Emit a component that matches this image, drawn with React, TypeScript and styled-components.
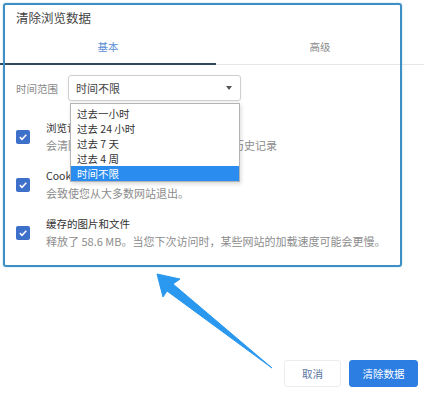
import React from "react";
import styled, { createGlobalStyle } from "styled-components";

const Global = createGlobalStyle`
  html, body { margin: 0; padding: 0; background: #fff; }
  body { font-family: "Noto Sans CJK SC", "Noto Sans", sans-serif; }
  * { box-sizing: border-box; }
`;

const Dialog = styled.div`
  position: relative;
  width: 424px;
  height: 396px;
  background: #fff;
  display: flex;
  flex-direction: column;
  overflow: hidden;
`;

const Title = styled.div`
  padding: 9px 16px 0 16px;
  height: 32px;
  font-size: 12.5px;
  line-height: 18px;
  color: #444;
`;

const TabBar = styled.div`
  display: flex;
  height: 33px;
  border-bottom: 1px solid #e6e6e6;
`;

const Tab = styled.div<{ $active?: boolean; $w?: number }>`
  ${(p) => (p.$w ? `width: ${p.$w}px;` : "flex: 1;")}
  display: flex;
  align-items: center;
  justify-content: center;
  font-size: 10.5px;
  color: ${(p) => (p.$active ? "#5b8ed2" : "#8a8a8a")};
  border-bottom: 2px solid ${(p) => (p.$active ? "#2f4a63" : "transparent")};
  margin-bottom: -1px;
  padding-bottom: 2px;
`;

const Body = styled.div`
  padding: 10px 0 0 16px;
  display: flex;
  flex-direction: column;
`;

const RangeRow = styled.div`
  display: flex;
  align-items: center;
  height: 26px;
`;

const RangeLabel = styled.div`
  width: 52px;
  font-size: 10.5px;
  color: #8a8a8a;
`;

const SelectWrap = styled.div`
  position: relative;
`;

const SelectBox = styled.div`
  width: 173px;
  height: 26px;
  border: 1px solid #cfcfcf;
  border-radius: 3px;
  box-shadow: 0 1px 2px rgba(0, 0, 0, 0.08);
  display: flex;
  align-items: center;
  justify-content: space-between;
  padding: 0 8px 0 7px;
  font-size: 11px;
  color: #444;
`;

const Caret = styled.span`
  width: 0;
  height: 0;
  border-left: 3.5px solid transparent;
  border-right: 3.5px solid transparent;
  border-top: 4px solid #555;
`;

const DropList = styled.div`
  position: absolute;
  left: 2px;
  top: 28px;
  width: 170px;
  padding-top: 2px;
  background: #fff;
  border: 1px solid #b4b4b4;
  box-shadow: 1px 2px 4px rgba(0, 0, 0, 0.15);
  z-index: 3;
`;

const DropItem = styled.div<{ $selected?: boolean }>`
  height: 15px;
  line-height: 15px;
  padding-left: 6px;
  font-size: 10.5px;
  color: ${(p) => (p.$selected ? "#fff" : "#333")};
  background: ${(p) => (p.$selected ? "#2a8cef" : "transparent")};
`;

const Options = styled.div`
  display: flex;
  flex-direction: column;
  gap: 15px;
  margin-top: 19px;
`;

const OptionRow = styled.div`
  display: flex;
  align-items: center;
`;

const Check = styled.div`
  width: 14px;
  height: 14px;
  border-radius: 2px;
  background: #3c70c9;
  display: flex;
  align-items: center;
  justify-content: center;
  margin-right: 16px;
  flex: none;
`;

const OptionText = styled.div`
  display: flex;
  flex-direction: column;
  gap: 1px;
`;

const OptionTitle = styled.div`
  font-size: 10.5px;
  line-height: 16px;
  color: #333;
  white-space: nowrap;
`;

const OptionSub = styled.div`
  font-size: 11px;
  line-height: 16px;
  color: #8c8c8c;
  white-space: nowrap;
`;

const Footer = styled.div`
  margin-top: auto;
  display: flex;
  justify-content: flex-end;
  gap: 8px;
  padding: 0 6px 9px 0;
`;

const Button = styled.div<{ $primary?: boolean }>`
  height: 27px;
  width: ${(p) => (p.$primary ? "69px" : "57px")};
  border-radius: 3px;
  display: flex;
  align-items: center;
  justify-content: center;
  font-size: 10.5px;
  color: ${(p) => (p.$primary ? "#fff" : "#5a74a0")};
  background: ${(p) => (p.$primary ? "#2c7ee2" : "#fff")};
  border: 1px solid ${(p) => (p.$primary ? "#2c7ee2" : "#ececec")};
`;

const Highlight = styled.div`
  position: absolute;
  left: 3px;
  top: 3px;
  width: 399px;
  height: 264px;
  border: 2px solid #3d8fc4;
  border-radius: 3px;
  box-shadow: 0 0 2px rgba(61, 143, 196, 0.4);
  pointer-events: none;
  z-index: 4;
`;

const ArrowSvg = styled.svg`
  position: absolute;
  left: 0;
  top: 0;
  z-index: 5;
  pointer-events: none;
`;

const CheckMark = () => (
  <svg width="10" height="10" viewBox="0 0 10 10">
    <polyline points="1.8,5.2 4,7.3 8.3,2.8" fill="none" stroke="#fff" strokeWidth="1.6" />
  </svg>
);

const options = [
  { title: "浏览记录", sub: "会清除所有已登录并同步设备上的浏览历史记录" },
  { title: "Cookie 及其他网站数据", sub: "会致使您从大多数网站退出。" },
  { title: "缓存的图片和文件", sub: "释放了 58.6 MB。当您下次访问时，某些网站的加载速度可能会更慢。" },
];

const ranges = ["过去一小时", "过去 24 小时", "过去 7 天", "过去 4 周", "时间不限"];

export default function App() {
  return (
    <>
      <Global />
      <Dialog>
        <Title>清除浏览数据</Title>
        <TabBar>
          <Tab $active $w={216}>基本</Tab>
          <Tab>高级</Tab>
        </TabBar>
        <Body>
          <RangeRow>
            <RangeLabel>时间范围</RangeLabel>
            <SelectWrap>
              <SelectBox>
                <span>时间不限</span>
                <Caret />
              </SelectBox>
              <DropList>
                {ranges.map((r, i) => (
                  <DropItem key={r} $selected={i === ranges.length - 1}>
                    {r}
                  </DropItem>
                ))}
              </DropList>
            </SelectWrap>
          </RangeRow>
          <Options>
            {options.map((o) => (
              <OptionRow key={o.title}>
                <Check>
                  <CheckMark />
                </Check>
                <OptionText>
                  <OptionTitle>{o.title}</OptionTitle>
                  <OptionSub>{o.sub}</OptionSub>
                </OptionText>
              </OptionRow>
            ))}
          </Options>
        </Body>
        <Footer>
          <Button>取消</Button>
          <Button $primary>清除数据</Button>
        </Footer>
        <Highlight />
        <ArrowSvg width="424" height="396" viewBox="0 0 424 396">
          <path
            d="M157,274 L180,279 L173,284 L272,368 L167,291 L163,297 Z"
            fill="#2a98ee"
            stroke="#2a98ee"
            strokeWidth="1"
            strokeLinejoin="round"
          />
        </ArrowSvg>
      </Dialog>
    </>
  );
}
